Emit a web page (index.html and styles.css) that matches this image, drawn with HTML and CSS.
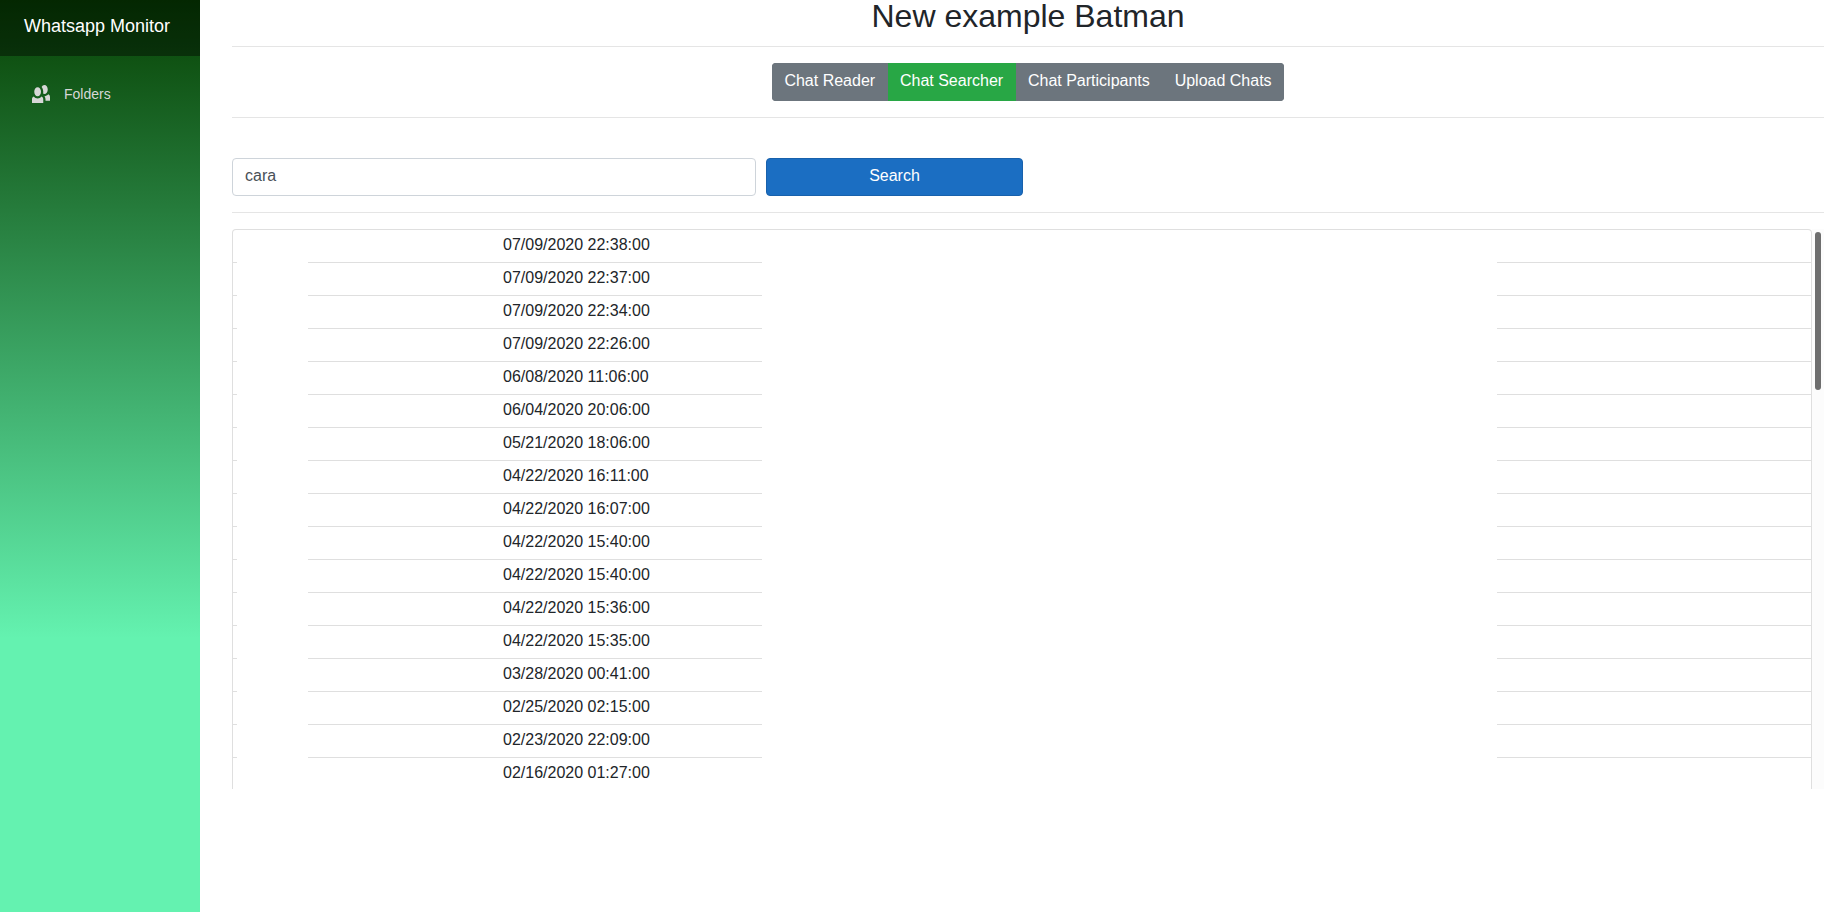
FILE: index.html
```html
<!DOCTYPE html>
<html lang="en">
<head>
<meta charset="utf-8">
<title>Whatsapp Monitor</title>
<link rel="stylesheet" href="styles.css">
</head>
<body>
<div class="layout">
  <aside class="sidebar">
    <header class="brand-bar"><a class="brand" href="#">Whatsapp Monitor</a></header>
    <nav class="menu">
      <a class="menu-link" href="#">
        <svg class="menu-icon" viewBox="0 0 8 8" aria-hidden="true"><path d="M5.5 0c-.51 0-.95.35-1.22.88.45.54.72 1.28.72 2.13 0 .29-.03.55-.09.81.19.11.38.19.59.19.83 0 1.5-.9 1.5-2s-.67-2-1.5-2zM2.5 1c-.83 0-1.5.9-1.5 2s.67 2 1.5 2 1.5-.9 1.5-2-.67-2-1.5-2zM7.25 4.16c-.43.51-1.02.82-1.69.84.27.38.44.84.44 1.34v.66h2v-1.66c0-.52-.31-.97-.75-1.19zM.75 5.16c-.44.22-.75.67-.75 1.19v1.65h5v-1.65c0-.52-.31-.97-.75-1.19-.45.53-1.06.84-1.75.84s-1.3-.32-1.75-.84z"/></svg>
        Folders
      </a>
    </nav>
  </aside>
  <main class="content">
    <h2 class="title">New example Batman</h2>
    <hr class="rule">
    <div class="tabs">
      <div class="btn-group">
        <button class="btn" type="button">Chat Reader</button>
        <button class="btn btn-active" type="button">Chat Searcher</button>
        <button class="btn" type="button">Chat Participants</button>
        <button class="btn" type="button">Upload Chats</button>
      </div>
    </div>
    <hr class="rule">
    <form class="search">
      <input class="search-input" type="text" value="cara" aria-label="Search text">
      <button class="btn btn-search" type="button">Search</button>
    </form>
    <hr class="rule">
    <div class="results">
      <div class="frame">
        <table class="messages" aria-label="Messages">
          <colgroup><col class="col-edge"><col class="col-name"><col class="col-date"><col class="col-text"><col></colgroup>
          <tbody>
            <tr><td></td><td></td><td>07/09/2020 22:38:00</td><td></td><td></td></tr>
            <tr><td></td><td></td><td>07/09/2020 22:37:00</td><td></td><td></td></tr>
            <tr><td></td><td></td><td>07/09/2020 22:34:00</td><td></td><td></td></tr>
            <tr><td></td><td></td><td>07/09/2020 22:26:00</td><td></td><td></td></tr>
            <tr><td></td><td></td><td>06/08/2020 11:06:00</td><td></td><td></td></tr>
            <tr><td></td><td></td><td>06/04/2020 20:06:00</td><td></td><td></td></tr>
            <tr><td></td><td></td><td>05/21/2020 18:06:00</td><td></td><td></td></tr>
            <tr><td></td><td></td><td>04/22/2020 16:11:00</td><td></td><td></td></tr>
            <tr><td></td><td></td><td>04/22/2020 16:07:00</td><td></td><td></td></tr>
            <tr><td></td><td></td><td>04/22/2020 15:40:00</td><td></td><td></td></tr>
            <tr><td></td><td></td><td>04/22/2020 15:40:00</td><td></td><td></td></tr>
            <tr><td></td><td></td><td>04/22/2020 15:36:00</td><td></td><td></td></tr>
            <tr><td></td><td></td><td>04/22/2020 15:35:00</td><td></td><td></td></tr>
            <tr><td></td><td></td><td>03/28/2020 00:41:00</td><td></td><td></td></tr>
            <tr><td></td><td></td><td>02/25/2020 02:15:00</td><td></td><td></td></tr>
            <tr><td></td><td></td><td>02/23/2020 22:09:00</td><td></td><td></td></tr>
            <tr><td></td><td></td><td>02/16/2020 01:27:00</td><td></td><td></td></tr>
          </tbody>
        </table>
      </div>
      <div class="scroll-track" aria-hidden="true"><div class="scroll-thumb"></div></div>
    </div>
  </main>
</div>
</body>
</html>
```
FILE: styles.css
```css
* { box-sizing: border-box; }

body {
  margin: 0;
  font: 16px/24px "Liberation Sans", Arial, sans-serif;
  color: #212529;
  background: #fff;
}

.layout { display: flex; min-height: 100vh; }

.sidebar {
  flex: 0 0 200px;
  background: linear-gradient(180deg, #074203 0%, #64f2b0 70%);
}

.brand-bar {
  display: flex;
  align-items: center;
  height: 56px;
  padding: 0 24px 4px;
  background: rgba(0, 0, 0, 0.4);
}

.brand { color: #fff; font-size: 18px; text-decoration: none; white-space: nowrap; }

.menu { padding: 14px 16px; }

.menu-link {
  display: flex;
  align-items: center;
  gap: 14px;
  height: 48px;
  padding: 0 16px;
  border-radius: 4px;
  color: #d7d7d7;
  font-size: 14px;
  text-decoration: none;
}

.menu-icon { width: 18px; height: 18px; fill: currentColor; }

.content { flex: 1; min-width: 0; padding: 0 24px 0 32px; }

.title { margin: 0; padding-top: 2px; font-size: 32px; line-height: 28px; font-weight: 400; text-align: center; }

.rule { margin: 16px 0; border: 0; border-top: 1px solid #e5e5e5; }

.tabs { display: flex; justify-content: center; }

.btn-group { display: flex; width: 512px; border-radius: 4px; overflow: hidden; }

.btn {
  height: 38px;
  margin: 0;
  padding: 5px 10px 7px;
  border: 1px solid #6c757d;
  background: #6c757d;
  color: #fff;
  font: inherit;
  white-space: nowrap;
}

.btn-group .btn { flex: 1 1 auto; }

.btn-active { background: #28a745; border-color: #28a745; }

.search {
  display: grid;
  grid-template-columns: 524fr 257fr 791fr;
  gap: 10px;
  padding-top: 24px;
}

.search-input {
  width: 100%;
  height: 38px;
  padding: 5px 12px 7px;
  border: 1px solid #ced4da;
  border-radius: 4px;
  color: #495057;
  background: #fff;
  font: inherit;
}

.btn-search { background: #1b6ec2; border-color: #1861ac; border-radius: 4px; }

.results { display: flex; }

.frame {
  flex: 1;
  border: 1px solid #dfdfdf;
  border-bottom: 0;
  border-radius: 4px 4px 0 0;
}

.messages { width: 100%; table-layout: fixed; border-collapse: separate; border-spacing: 0; }

.col-edge { width: 4px; }
.col-name { width: 71px; }
.col-date { width: 454px; }
.col-text { width: 735px; }

.messages td { height: 33px; padding: 3px 0 5px; border-bottom: 1px solid #dfdfdf; }
.messages td:nth-child(2), .messages td:nth-child(4) { border-bottom: 0; }
.messages td:nth-child(3) { padding-left: 195px; white-space: nowrap; }
.messages tr:last-child td { height: 31px; padding-bottom: 4px; border-bottom: 0; }

.scroll-track { flex: 0 0 12px; padding: 3px; background: #fcfcfc; }
.scroll-thumb { height: 158px; border-radius: 3px; background: #6e6e6e; }
```
